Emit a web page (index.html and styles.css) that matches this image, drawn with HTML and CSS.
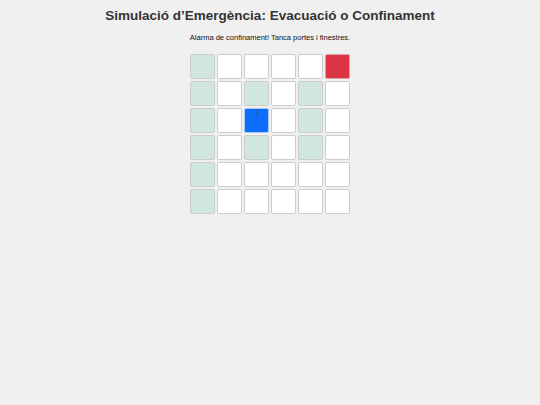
FILE: index.html
```html
<!DOCTYPE html>
<html lang="ca">
<head>
<meta charset="utf-8">
<title>Simulació</title>
<link rel="stylesheet" href="styles.css">
</head>
<body>
<h1 class="title">Simulació d’Emergència: Evacuació o Confinament</h1>
<p class="status">Alarma de confinament! Tanca portes i finestres.</p>
<div class="grid">
  <div class="cell safe"></div><div class="cell"></div><div class="cell"></div><div class="cell"></div><div class="cell"></div><div class="cell danger"></div>
  <div class="cell safe"></div><div class="cell"></div><div class="cell safe"></div><div class="cell"></div><div class="cell safe"></div><div class="cell"></div>
  <div class="cell safe"></div><div class="cell"></div><div class="cell player"><svg class="icon" viewBox="0 0 6 8" width="6" height="8"><circle cx="3" cy="1.3" r="1.1" fill="#2a5ea8"/><rect x="2" y="2.8" width="2" height="3.5" rx="0.8" fill="#2a5ea8"/></svg></div><div class="cell"></div><div class="cell safe"></div><div class="cell"></div>
  <div class="cell safe"></div><div class="cell"></div><div class="cell safe"></div><div class="cell"></div><div class="cell safe"></div><div class="cell"></div>
  <div class="cell safe"></div><div class="cell"></div><div class="cell"></div><div class="cell"></div><div class="cell"></div><div class="cell"></div>
  <div class="cell safe"></div><div class="cell"></div><div class="cell"></div><div class="cell"></div><div class="cell"></div><div class="cell"></div>
</div>
</body>
</html>
```
FILE: styles.css
```css
html, body {
  margin: 0;
  padding: 0;
  background: #f0f0f0;
  font-family: "Liberation Sans", Arial, sans-serif;
  color: #333;
}
body {
  padding-top: 8px;
}
.title {
  margin: 0;
  text-align: center;
  font-size: 13.5px;
  line-height: 16px;
  font-weight: bold;
  color: #333;
}
.status {
  margin: 9px 0 0;
  text-align: center;
  font-size: 7.5px;
  line-height: 10px;
  color: #111;
}
.grid {
  margin: 11px auto 0;
  width: 160px;
  display: grid;
  grid-template-columns: repeat(6, 25px);
  grid-auto-rows: 25px;
  gap: 2px;
}
.cell {
  box-sizing: border-box;
  background: #ffffff;
  border: 1px solid #cccccc;
  border-radius: 2px;
  display: flex;
  justify-content: center;
  align-items: flex-start;
}
.safe {
  background: #d1e7dd;
}
.danger {
  background: #dc3545;
  border-color: #d9a0a6;
}
.player {
  background: #0d6efd;
  border-color: #a8c8f0;
}
.icon {
  margin-top: 1px;
}
```
